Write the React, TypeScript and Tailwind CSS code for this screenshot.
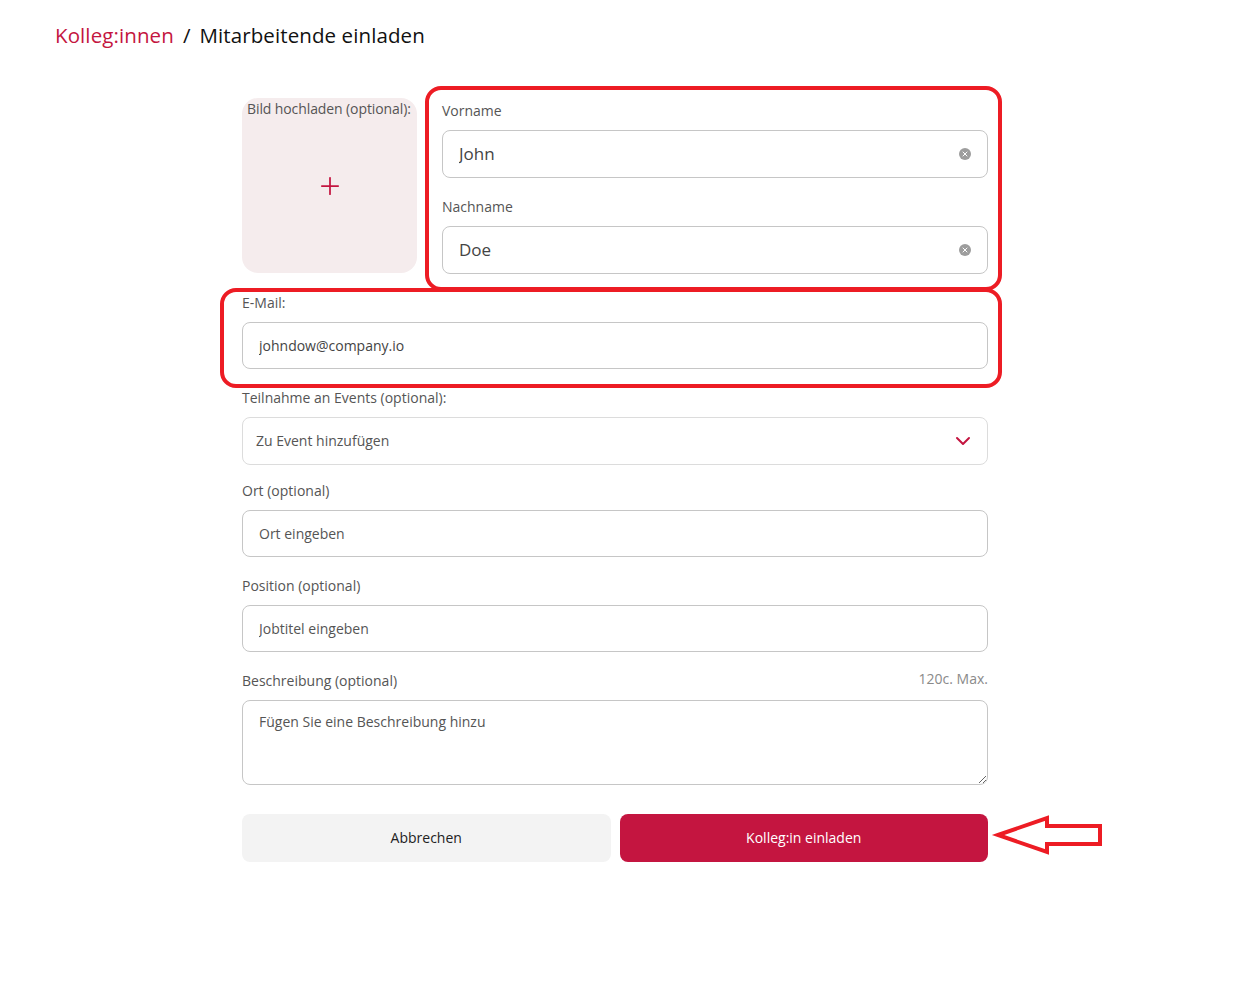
import { ChevronDown, Plus, X } from "lucide-react";

const font = { fontFamily: '"Open Sans", "Noto Sans", sans-serif' };

function Label({ children }: { children: React.ReactNode }) {
  return <label className="block h-5 text-sm leading-5 text-[#555]">{children}</label>;
}

function ClearButton() {
  return (
    <span className="flex h-3 w-3 items-center justify-center rounded-full bg-[#9d9d9d]">
      <X className="h-2 w-2 text-white" strokeWidth={3} />
    </span>
  );
}

function NameField({ label, value }: { label: string; value: string }) {
  return (
    <div>
      <Label>{label}</Label>
      <div className="mt-[9px] flex h-12 items-center rounded-lg border border-[#c6c6c6] pl-4 pr-[16px]">
        <input
          defaultValue={value}
          className="flex-1 bg-transparent text-[17px] text-[#444] outline-none"
        />
        <ClearButton />
      </div>
    </div>
  );
}

function TextField({ label, placeholder, value }: { label: string; placeholder?: string; value?: string }) {
  return (
    <div>
      <Label>{label}</Label>
      <input
        defaultValue={value}
        placeholder={placeholder}
        className="mt-[9px] block h-[47px] w-full rounded-lg border border-[#c6c6c6] px-4 text-sm text-[#444] outline-none placeholder:text-[#555]"
      />
    </div>
  );
}

export default function App() {
  return (
    <div className="relative min-h-screen bg-white text-[#222]" style={font}>
      <div className="px-[55px] pt-[21px]">
        <h1 className="text-[20.5px] font-medium leading-7 tracking-[0.1px]">
          <span className="text-[#c41540]">Kolleg:innen</span>
          <span className="mx-[9px] text-[#111]">/</span>
          <span className="text-[#111]">Mitarbeitende einladen</span>
        </h1>

        <form className="ml-[187px] mt-[49px] w-[746px]">
          <div className="flex gap-[25px]">
            <div className="relative h-[175px] w-[175px] shrink-0 rounded-2xl bg-[#f5eced] pl-[5px] pt-[1px]">
              <span className="block whitespace-nowrap text-sm leading-5 tracking-[-0.1px] text-[#555]">
                Bild hochladen (optional):
              </span>
              <Plus className="absolute left-[74px] top-[74px] h-7 w-7 text-[#c41540]" strokeWidth={1.5} />
            </div>
            <div className="flex flex-1 flex-col gap-[19px] pt-[3px]">
              <NameField label="Vorname" value="John" />
              <NameField label="Nachname" value="Doe" />
            </div>
          </div>

          <div className="mt-[19px] flex flex-col gap-[19px]">
            <TextField label="E-Mail:" value="johndow@company.io" />

            <div>
              <Label>Teilnahme an Events (optional):</Label>
              <div className="mt-[9px] flex h-[48px] items-center justify-between rounded-lg border border-[#dcdcdc] pl-[13px] pr-[12px]">
                <span className="text-sm text-[#555]">Zu Event hinzufügen</span>
                <ChevronDown className="h-6 w-6 text-[#c41540]" strokeWidth={2} />
              </div>
            </div>

            <div className="-mt-[3px]">
              <TextField label="Ort (optional)" placeholder="Ort eingeben" />
            </div>
            <TextField label="Position (optional)" placeholder="Jobtitel eingeben" />

            <div>
              <div className="flex items-start justify-between">
                <Label>Beschreibung (optional)</Label>
                <span className="-mt-[2px] text-sm leading-5 text-[#8a8a8a]">120c. Max.</span>
              </div>
              <textarea
                placeholder="Fügen Sie eine Beschreibung hinzu"
                className="mt-[9px] block h-[85px] w-full rounded-lg border border-[#c6c6c6] px-4 py-[11px] text-sm text-[#444] outline-none placeholder:text-[#555]"
              />
            </div>
          </div>

          <div className="mt-[29px] flex gap-[9px]">
            <button type="button" className="h-12 flex-1 rounded-lg bg-[#f3f3f3] text-sm text-[#222]">
              Abbrechen
            </button>
            <button type="button" className="h-12 flex-1 rounded-lg bg-[#c41540] text-sm text-white">
              Kolleg:in einladen
            </button>
          </div>
        </form>
      </div>

      {/* annotations */}
      <div className="pointer-events-none absolute left-[425px] top-[86px] h-[205px] w-[577px] rounded-[16px] border-4 border-[#ed1c24]" />
      <div className="pointer-events-none absolute left-[220px] top-[288px] h-[100px] w-[782px] rounded-[16px] border-4 border-[#ed1c24]" />
      <svg className="pointer-events-none absolute left-[990px] top-[812px]" width="116" height="46" viewBox="990 812 116 46">
        <polygon
          points="998,835 1047,818 1047,826 1100,826 1100,844 1047,844 1047,852"
          fill="none"
          stroke="#ed1c24"
          strokeWidth="4"
          strokeLinejoin="miter"
        />
      </svg>
    </div>
  );
}
